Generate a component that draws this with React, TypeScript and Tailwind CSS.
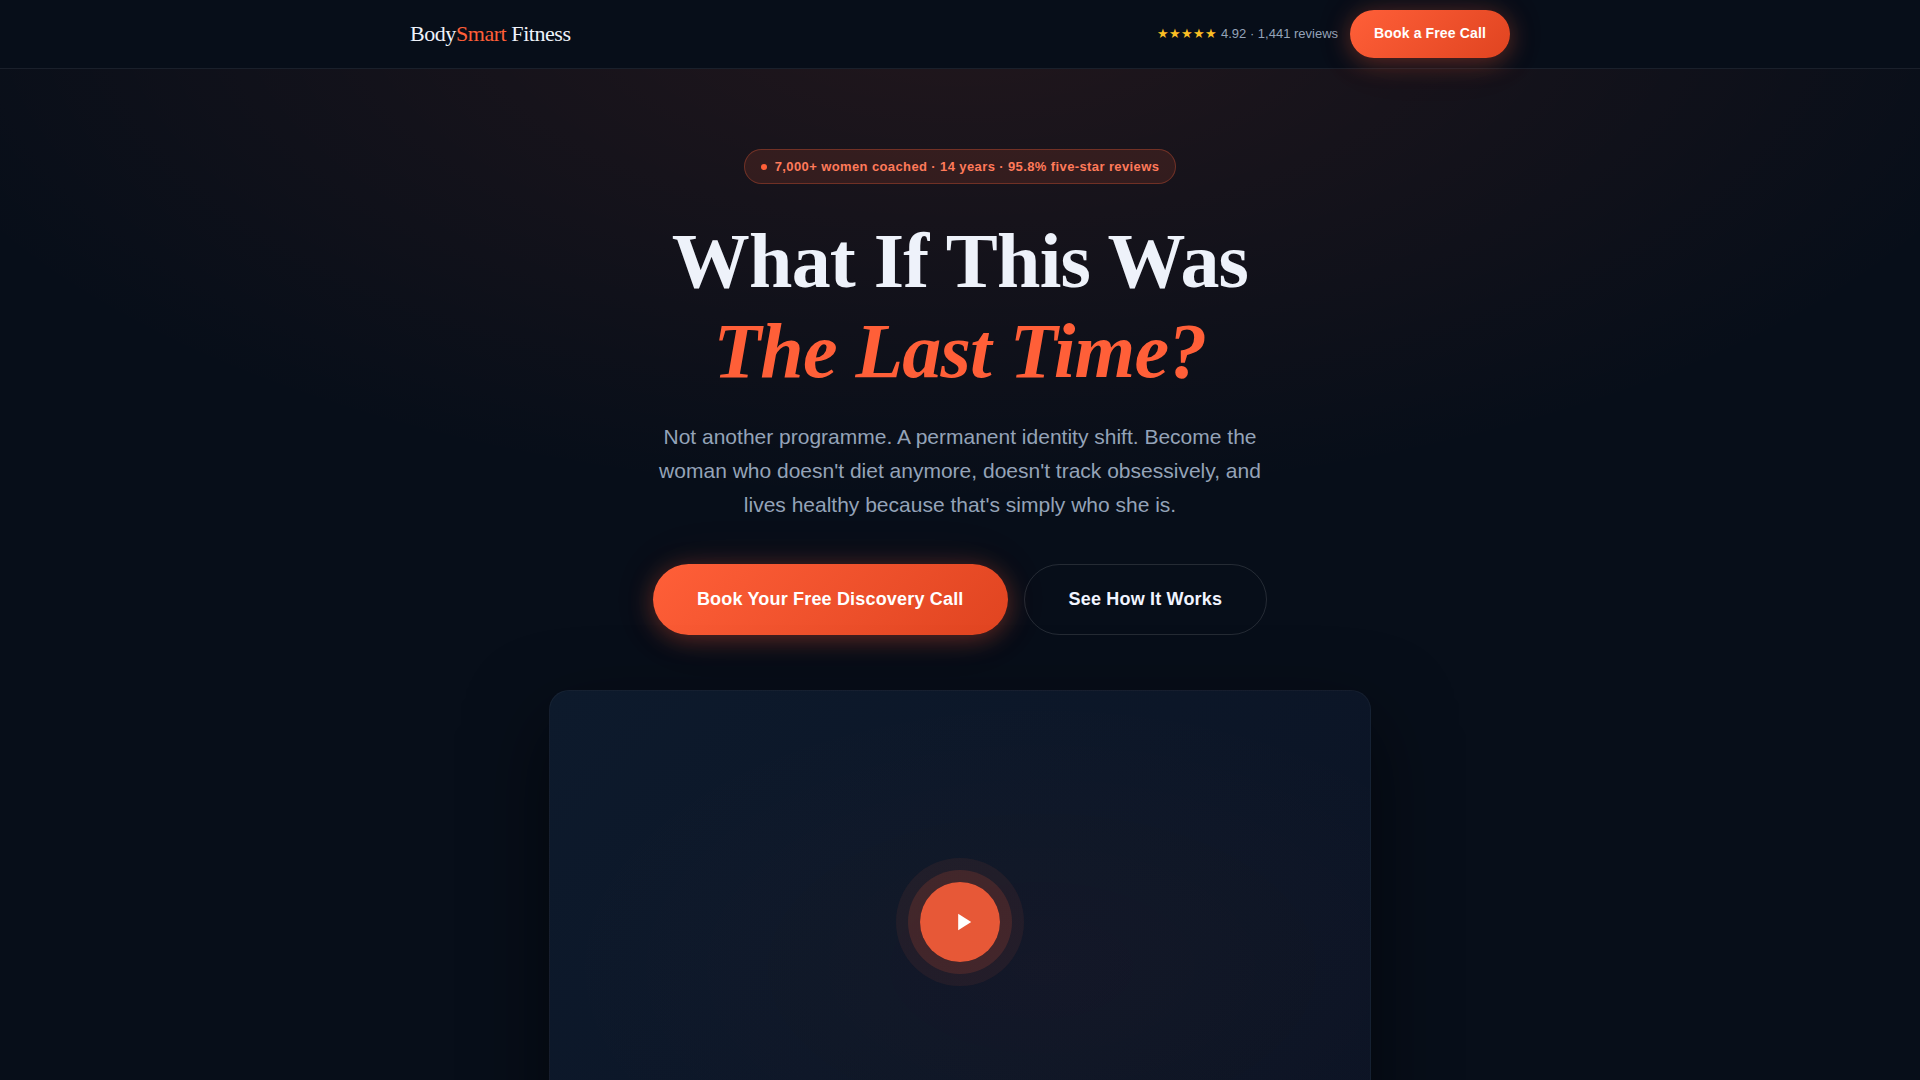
import clsx from "clsx";

interface PillLinkProps {
  href: string;
  label: string;
  size?: "sm" | "lg";
  outline?: boolean;
}

function PillLink({ href, label, size = "lg", outline = false }: PillLinkProps) {
  return (
    <a
      href={href}
      className={clsx(
        "flex items-center rounded-full pb-0.5 font-bold tracking-[0.01em]",
        size === "sm" ? "h-12 px-6 text-sm" : "h-[71px] px-11 text-lg",
        outline
          ? "border border-white/12 text-[#f0f4ff]"
          : "bg-linear-135 from-[#ff5f38] to-[#e04420] text-white shadow-[0_4px_24px_rgba(255,92,53,0.35),0_0_60px_rgba(255,92,53,0.06)]"
      )}
    >
      {label}
    </a>
  );
}

function Header() {
  return (
    <header className="relative z-10 border-b border-white/8 bg-[#070e19]">
      <div className="mx-auto flex max-w-[1100px] items-center justify-between py-2.5">
        <a href="#" className="pb-0.5 font-['Liberation_Serif',serif] text-[22px] tracking-[-0.02em] text-[#eef2fa]">
          Body<span className="text-[#ff5f38]">Smart</span> Fitness
        </a>
        <div className="flex items-center gap-3">
          <div className="flex items-center gap-1 text-[13px] text-[#94a3b8]">
            <span className="text-[#fbbf24]" role="img" aria-label="5 stars">★★★★★</span>
            <span>4.92 · 1,441 reviews</span>
          </div>
          <PillLink href="#book" label="Book a Free Call" size="sm" />
        </div>
      </div>
    </header>
  );
}

function VideoCard() {
  return (
    <div className="mt-[55px] box-content flex aspect-video w-full max-w-[820px] items-center justify-center rounded-[20px] border border-white/4 bg-[radial-gradient(ellipse_at_60%_60%,rgba(255,92,53,0.03),transparent_70%),linear-gradient(135deg,#0d1a2c,#0b1324)] shadow-[0_30px_80px_rgba(0,0,0,0.55)]">
      <button
        type="button"
        aria-label="Play video"
        className="flex size-20 items-center justify-center rounded-full bg-[#ff5f38]/90 shadow-[0_0_0_12px_rgba(255,95,56,0.15),0_0_0_24px_rgba(255,95,56,0.07)]"
      >
        <svg viewBox="0 0 28 28" className="ml-1 size-7 fill-white">
          <path d="M10.2 5.8v16.4L23.2 14z" />
        </svg>
      </button>
    </div>
  );
}

function Hero() {
  return (
    <section className="flex flex-col items-center bg-[radial-gradient(ellipse_80%_60%_at_50%_-6%,rgba(255,95,56,0.11),transparent_72%)] px-6 pt-20 pb-20 text-center">
      <p className="flex h-[35px] items-center gap-2 rounded-full border border-[#ff5f38]/30 bg-[#ff5f38]/12 px-4 text-[13px] font-bold tracking-[0.03em] text-[#ff7a5a]">
        <span className="size-1.5 rounded-full bg-[#ff5f38]" />
        7,000+ women coached · 14 years · 95.8% five-star reviews
      </p>
      <h1 className="mt-8 font-['Liberation_Serif',serif] text-[78px] leading-[90px] font-bold tracking-[-0.01em] text-[#eef2fa]">
        What If This Was
        <br />
        <em className="text-[#ff5f38]">The Last Time?</em>
      </h1>
      <p className="mt-6 max-w-[620px] text-[21px] leading-[34px] text-[#94a3b8]">
        Not another programme. A permanent identity shift. Become the woman who doesn't diet anymore, doesn't track
        obsessively, and lives healthy because that's simply who she is.
      </p>
      <div className="mt-[42px] flex flex-wrap justify-center gap-4">
        <PillLink href="#book" label="Book Your Free Discovery Call" />
        <PillLink href="#how" label="See How It Works" outline />
      </div>
      <VideoCard />
    </section>
  );
}

export default function App() {
  return (
    <div className="min-h-screen bg-[#070e19] font-['Liberation_Sans',sans-serif]">
      <Header />
      <main>
        <Hero />
      </main>
    </div>
  );
}
